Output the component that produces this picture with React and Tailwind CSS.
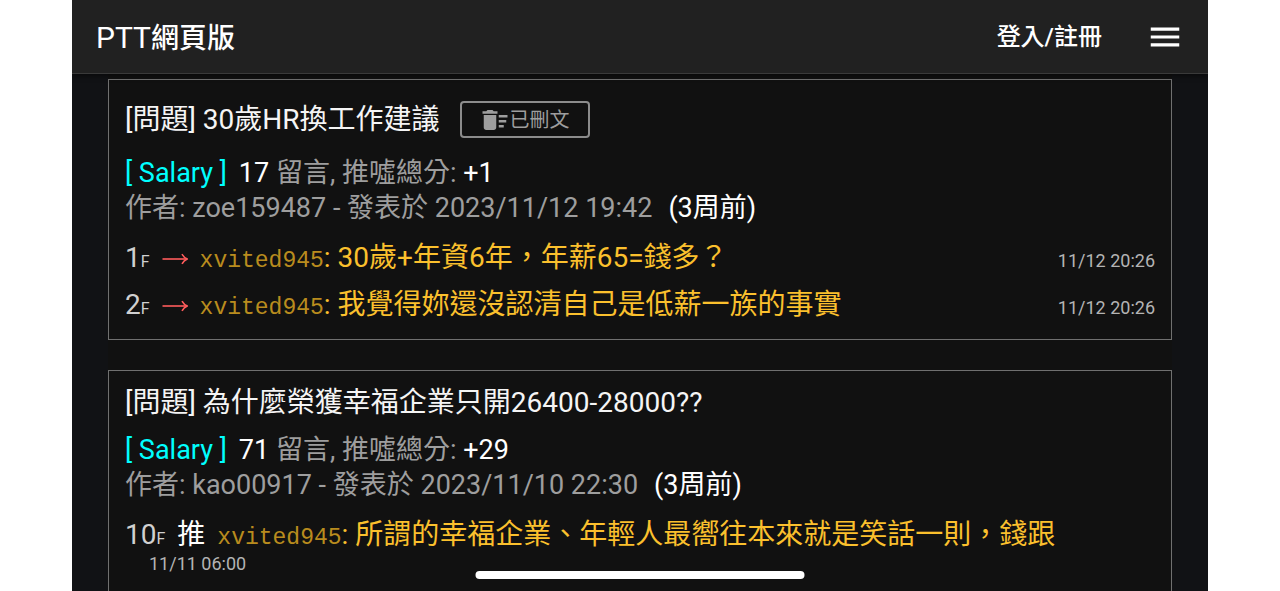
import { MdDeleteSweep, MdMenu } from "react-icons/md";

const posts = [
  {
    title: "[問題] 30歲HR換工作建議",
    deleted: true,
    board: "Salary",
    replies: 17,
    score: "+1",
    author: "zoe159487",
    date: "2023/11/12 19:42",
    ago: "(3周前)",
    comments: [
      { floor: 1, tag: "→", user: "xvited945", text: "30歲+年資6年，年薪65=錢多？", time: "11/12 20:26" },
      { floor: 2, tag: "→", user: "xvited945", text: "我覺得妳還沒認清自己是低薪一族的事實", time: "11/12 20:26" },
    ],
  },
  {
    title: "[問題] 為什麼榮獲幸福企業只開26400-28000??",
    deleted: false,
    board: "Salary",
    replies: 71,
    score: "+29",
    author: "kao00917",
    date: "2023/11/10 22:30",
    ago: "(3周前)",
    comments: [
      {
        floor: 10,
        tag: "推",
        user: "xvited945",
        text: "所謂的幸福企業、年輕人最嚮往本來就是笑話一則，錢跟",
        time: "11/11 06:00",
      },
    ],
  },
];

function Header() {
  return (
    <header className="relative z-10 flex h-[74px] shrink-0 items-center justify-between border-b border-[#3a3a3a] bg-[#212121] px-6 text-white shadow-[0_2px_5px_rgba(0,0,0,0.5)]">
      <a href="#" className="pt-1 text-[28px] font-medium leading-9">
        <span className="text-[30px] font-normal leading-none">PTT</span>網頁版
      </a>
      <div className="flex items-center gap-11">
        <a href="#" className="text-2xl font-medium">
          登入/註冊
        </a>
        <button type="button" aria-label="選單">
          <MdMenu className="size-[38px]" />
        </button>
      </div>
    </header>
  );
}

function Arrow() {
  return (
    <svg viewBox="0 0 26 16" className="ml-3 h-4 w-[26px]" fill="none" stroke="#ff5c5c" strokeWidth="1.6" role="img" aria-label="→">
      <path d="M0.5 8H24.5" />
      <path d="M20 3.2C21.2 5.4 22.8 7.1 25.3 8C22.8 8.9 21.2 10.6 20 12.8" />
    </svg>
  );
}

function Comment({ comment }) {
  return (
    <li className="flex flex-wrap items-baseline py-1.5 leading-[35px]">
      <span className="text-[#d0d0d0]">
        {comment.floor}
        <span className="text-base leading-none">F</span>
      </span>
      {comment.tag === "→" ? <Arrow /> : <span className="ml-3 text-white">{comment.tag}</span>}
      <a href="#" className="ml-3 font-['Liberation_Mono',monospace] text-[23px] leading-none text-[#b98c1e]">
        {comment.user}
      </a>
      <span className="text-[#fbc02d]">:&nbsp;{comment.text}</span>
      {comment.tag === "→" ? (
        <time className="ml-auto text-lg leading-6 text-[#b4b4b4]">{comment.time}</time>
      ) : (
        <time className="ml-6 w-full text-lg leading-6 text-[#b4b4b4]">{comment.time}</time>
      )}
    </li>
  );
}

function Post({ post }) {
  return (
    <article
      className={`border border-[#707070] px-4 pb-[11px] text-[28px] leading-[35px] ${post.deleted ? "pt-[21px]" : "pt-[13px]"}`}
    >
      <div className="flex h-[37px] items-center gap-5">
        <h2 className="text-[#f5f5f5]">
          <a href="#">{post.title}</a>
        </h2>
        {post.deleted && (
          <span className="flex h-[37px] items-center rounded-sm border-2 border-[#8c8c8c] px-[18px] text-xl text-[#9e9e9e]">
            <MdDeleteSweep className="size-[30px]" />
            已刪文
          </span>
        )}
      </div>
      <div className={`text-[27px] text-[#9e9e9e] ${post.deleted ? "mt-[18px]" : "mt-3"}`}>
        <p>
          <a href="#" className="mr-3 text-[#00ffff]">
            [ {post.board} ]
          </a>
          <span className="text-white">{post.replies}</span> 留言, 推噓總分: <span className="text-white">{post.score}</span>
        </p>
        <p>
          作者: {post.author} - 發表於 {post.date}
          <span className="ml-4 text-white">{post.ago}</span>
        </p>
      </div>
      <ul className="mt-2">
        {post.comments.map((comment) => (
          <Comment key={comment.floor} comment={comment} />
        ))}
      </ul>
    </article>
  );
}

export default function App() {
  return (
    <div className="h-screen overflow-hidden bg-white px-[72px] font-[Roboto,'Noto_Sans_CJK_TC',sans-serif]">
      <div className="flex h-full flex-col overflow-hidden bg-[#111215]">
        <Header />
        <main className="mx-9 flex flex-col gap-[30px] bg-[#111111] pt-[5px] pb-10">
          {posts.map((post) => (
            <Post key={post.title} post={post} />
          ))}
        </main>
      </div>
      {/* home indicator */}
      <div className="fixed bottom-3 left-1/2 z-20 h-2 w-[329px] -translate-x-1/2 rounded-full bg-white" />
    </div>
  );
}
